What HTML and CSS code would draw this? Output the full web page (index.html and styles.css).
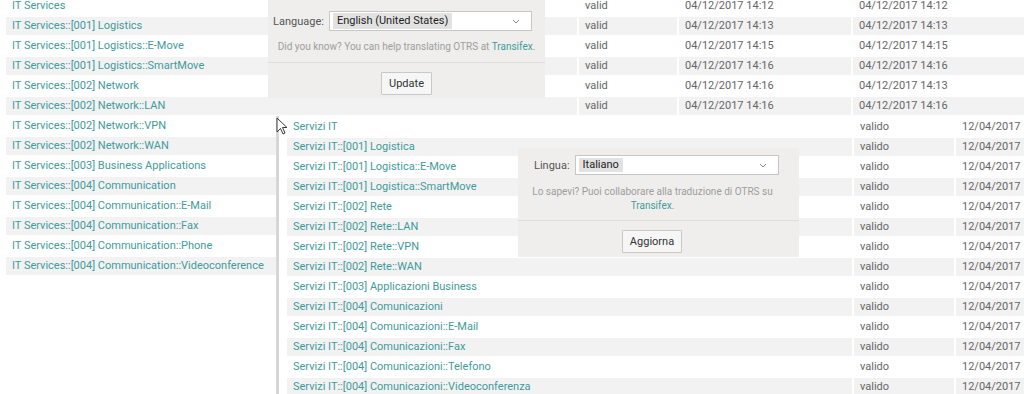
FILE: index.html
```html
<!DOCTYPE html>
<html lang="en">
<head>
<meta charset="UTF-8" />
<meta name="viewport" content="width=device-width, initial-scale=1.0"/>
<title>Service list - language switch</title>
<link rel="stylesheet" href="styles.css">
</head>
<body>
<div class="canvas">

  <!-- English service list -->
  <div class="service-list service-list-en">
    <div class="row"><div class="cell link">IT Services</div><div class="cell">valid</div><div class="cell">04/12/2017 14:12</div><div class="cell">04/12/2017 14:12</div></div>
    <div class="row"><div class="cell link">IT Services::[001] Logistics</div><div class="cell">valid</div><div class="cell">04/12/2017 14:13</div><div class="cell">04/12/2017 14:13</div></div>
    <div class="row"><div class="cell link">IT Services::[001] Logistics::E-Move</div><div class="cell">valid</div><div class="cell">04/12/2017 14:15</div><div class="cell">04/12/2017 14:15</div></div>
    <div class="row"><div class="cell link">IT Services::[001] Logistics::SmartMove</div><div class="cell">valid</div><div class="cell">04/12/2017 14:16</div><div class="cell">04/12/2017 14:16</div></div>
    <div class="row"><div class="cell link">IT Services::[002] Network</div><div class="cell">valid</div><div class="cell">04/12/2017 14:16</div><div class="cell">04/12/2017 14:13</div></div>
    <div class="row"><div class="cell link">IT Services::[002] Network::LAN</div><div class="cell">valid</div><div class="cell">04/12/2017 14:16</div><div class="cell">04/12/2017 14:16</div></div>
    <!-- the rest of these rows sit under the Italian screenshot -->
    <div class="row"><div class="cell link">IT Services::[002] Network::VPN</div><div class="cell"></div><div class="cell"></div><div class="cell"></div></div>
    <div class="row"><div class="cell link">IT Services::[002] Network::WAN</div><div class="cell"></div><div class="cell"></div><div class="cell"></div></div>
    <div class="row"><div class="cell link">IT Services::[003] Business Applications</div><div class="cell"></div><div class="cell"></div><div class="cell"></div></div>
    <div class="row"><div class="cell link">IT Services::[004] Communication</div><div class="cell"></div><div class="cell"></div><div class="cell"></div></div>
    <div class="row"><div class="cell link">IT Services::[004] Communication::E-Mail</div><div class="cell"></div><div class="cell"></div><div class="cell"></div></div>
    <div class="row"><div class="cell link">IT Services::[004] Communication::Fax</div><div class="cell"></div><div class="cell"></div><div class="cell"></div></div>
    <div class="row"><div class="cell link">IT Services::[004] Communication::Phone</div><div class="cell"></div><div class="cell"></div><div class="cell"></div></div>
    <div class="row"><div class="cell link">IT Services::[004] Communication::Videoconference</div><div class="cell"></div><div class="cell"></div><div class="cell"></div></div>
  </div>

  <!-- English language popup -->
  <div class="lang-popup lang-popup-en">
    <div class="lang-field">
      <span class="lang-label">Language:</span>
      <div class="lang-select">
        <span class="lang-value">English (United States)</span>
        <svg class="chevron" width="8" height="5" viewBox="0 0 8 5"><path d="M1 1 L4 4 L7 1" fill="none" stroke="#8a8a8a" stroke-width="1"/></svg>
      </div>
    </div>
    <p class="lang-note">Did you know? You can help translating OTRS at <span class="link">Transifex</span>.</p>
    <div class="lang-actions"><button class="lang-btn">Update</button></div>
  </div>

  <!-- Italian screenshot on top -->
  <div class="shot-it">
    <div class="service-list service-list-it">
      <div class="row"><div class="cell link">Servizi IT</div><div class="cell">valido</div><div class="cell">12/04/2017</div></div>
      <div class="row"><div class="cell link">Servizi IT::[001] Logistica</div><div class="cell">valido</div><div class="cell">12/04/2017</div></div>
      <div class="row"><div class="cell link">Servizi IT::[001] Logistica::E-Move</div><div class="cell">valido</div><div class="cell">12/04/2017</div></div>
      <div class="row"><div class="cell link">Servizi IT::[001] Logistica::SmartMove</div><div class="cell">valido</div><div class="cell">12/04/2017</div></div>
      <div class="row"><div class="cell link">Servizi IT::[002] Rete</div><div class="cell">valido</div><div class="cell">12/04/2017</div></div>
      <div class="row"><div class="cell link">Servizi IT::[002] Rete::LAN</div><div class="cell">valido</div><div class="cell">12/04/2017</div></div>
      <div class="row"><div class="cell link">Servizi IT::[002] Rete::VPN</div><div class="cell">valido</div><div class="cell">12/04/2017</div></div>
      <div class="row"><div class="cell link">Servizi IT::[002] Rete::WAN</div><div class="cell">valido</div><div class="cell">12/04/2017</div></div>
      <div class="row"><div class="cell link">Servizi IT::[003] Applicazioni Business</div><div class="cell">valido</div><div class="cell">12/04/2017</div></div>
      <div class="row"><div class="cell link">Servizi IT::[004] Comunicazioni</div><div class="cell">valido</div><div class="cell">12/04/2017</div></div>
      <div class="row"><div class="cell link">Servizi IT::[004] Comunicazioni::E-Mail</div><div class="cell">valido</div><div class="cell">12/04/2017</div></div>
      <div class="row"><div class="cell link">Servizi IT::[004] Comunicazioni::Fax</div><div class="cell">valido</div><div class="cell">12/04/2017</div></div>
      <div class="row"><div class="cell link">Servizi IT::[004] Comunicazioni::Telefono</div><div class="cell">valido</div><div class="cell">12/04/2017</div></div>
      <div class="row"><div class="cell link">Servizi IT::[004] Comunicazioni::Videoconferenza</div><div class="cell">valido</div><div class="cell">12/04/2017</div></div>
    </div>
  </div>

  <!-- Italian language popup -->
  <div class="lang-popup lang-popup-it">
    <div class="lang-field">
      <span class="lang-label">Lingua:</span>
      <div class="lang-select">
        <span class="lang-value">Italiano</span>
        <svg class="chevron" width="8" height="5" viewBox="0 0 8 5"><path d="M1 1 L4 4 L7 1" fill="none" stroke="#8a8a8a" stroke-width="1"/></svg>
      </div>
    </div>
    <p class="lang-note">Lo sapevi? Puoi collaborare alla traduzione di OTRS su <span class="link">Transifex</span>.</p>
    <div class="lang-actions"><button class="lang-btn">Aggiorna</button></div>
  </div>

  <!-- mouse pointer -->
  <svg class="cursor" width="12" height="19" viewBox="0 0 12 19"><path d="M1 1 L1 15 L4.5 11.5 L7 17 L9 16 L6.5 10.5 L11 10.5 Z" fill="#fff" stroke="#3a3a3a" stroke-width="1" stroke-linejoin="round"/></svg>

</div>
</body>
</html>
```

FILE: styles.css
```css
body {
  margin: 0;
  font-family: Roboto, "Liberation Sans", sans-serif;
  font-size: 11px;
  color: #666;
  background-color: #fff;
}
.canvas {
  position: relative;
  width: 1024px;
  height: 394px;
  overflow: hidden;
}
.link {
  color: #3f9b9b;
}

/* Service tables */
.service-list-en {
  margin-top: -5px;
  padding-left: 6px;
}
.row {
  display: grid;
  column-gap: 2px;
  padding-top: 2px;
}
.service-list-en .row {
  grid-template-columns: 571px 98px 172px 1fr;
}
.service-list-it .row {
  grid-template-columns: 565px 100px 1fr;
}
.cell {
  height: 18px;
  line-height: 18px;
  padding: 0 6px;
  white-space: nowrap;
  overflow: hidden;
}
.row:nth-child(even) .cell {
  background-color: #f2f2f2;
}

/* Italian screenshot laid over the first one */
.shot-it {
  position: absolute;
  left: 276px;
  top: 116px;
  right: 0;
  bottom: 0;
  background-color: #fff;
  border-left: 3px solid #d6d6d6;
  padding-left: 8px;
}

/* Language popups */
.lang-popup {
  position: absolute;
  background-color: #efeeed;
}
.lang-popup-en {
  left: 268px;
  top: 0;
  width: 277px;
  height: 98px;
  padding-top: 11px;
  box-sizing: border-box;
}
.lang-popup-it {
  left: 518px;
  top: 148px;
  width: 281px;
  height: 109px;
  padding-top: 7px;
  box-sizing: border-box;
}
.lang-field {
  display: flex;
  align-items: center;
  height: 20px;
}
.lang-popup-en .lang-field {
  padding-left: 5px;
}
.lang-popup-it .lang-field {
  padding-left: 16px;
}
.lang-label {
  font-size: 11px;
  color: #555;
  margin-right: 5px;
}
.lang-select {
  display: flex;
  align-items: center;
  height: 20px;
  box-sizing: border-box;
  border: 1px solid #c6c6c6;
  background-color: #fff;
  padding: 0 3px;
}
.lang-popup-en .lang-select {
  width: 203px;
}
.lang-popup-it .lang-select {
  width: 204px;
}
.lang-value {
  background-color: #e2e2e2;
  color: #222;
  padding: 0 4px;
  line-height: 16px;
}
.lang-popup-it .lang-value {
  line-height: 14px;
}
.chevron {
  margin-left: auto;
  margin-right: 8px;
}
.lang-note {
  margin: 0;
  text-align: center;
  font-size: 10px;
  line-height: 14px;
  color: #9d9d9d;
}
.lang-popup-en .lang-note {
  margin-top: 9px;
  white-space: nowrap;
}
.lang-popup-it .lang-note {
  margin: 10px 22px 0 10px;
}
.lang-actions {
  border-top: 1px solid #dedddb;
  text-align: center;
  padding-top: 9px;
}
.lang-popup-en .lang-actions {
  margin-top: 8px;
}
.lang-popup-it .lang-actions {
  margin-top: 7px;
  padding-right: 13px;
}
.lang-btn {
  font-family: Roboto, "Liberation Sans", sans-serif;
  font-size: 11px;
  color: #333;
  height: 23px;
  padding: 0 7px;
  background-color: #f6f6f6;
  border: 1px solid #c8c8c8;
  border-radius: 1px;
}

.cursor {
  position: absolute;
  left: 276px;
  top: 117px;
}
```
